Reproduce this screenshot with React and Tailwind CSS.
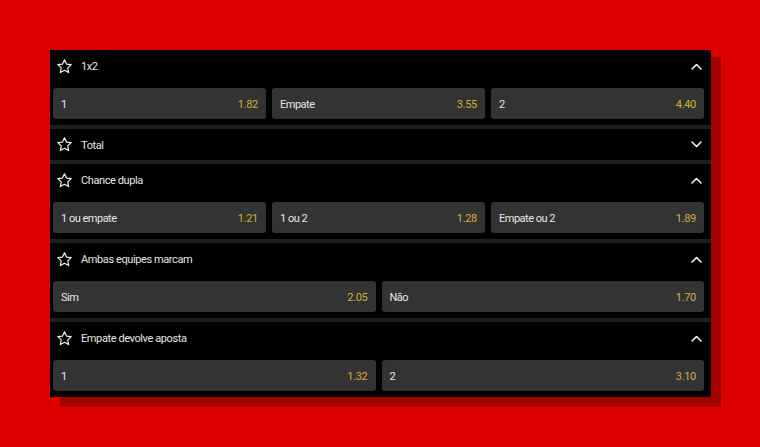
import React from "react";

const sections = [
  { title: "1x2", open: true, odds: [["1", "1.82"], ["Empate", "3.55"], ["2", "4.40"]] },
  { title: "Total", open: false, odds: [] },
  { title: "Chance dupla", open: true, odds: [["1 ou empate", "1.21"], ["1 ou 2", "1.28"], ["Empate ou 2", "1.89"]] },
  { title: "Ambas equipes marcam", open: true, odds: [["Sim", "2.05"], ["Não", "1.70"]] },
  { title: "Empate devolve aposta", open: true, odds: [["1", "1.32"], ["2", "3.10"]] },
];

function Star() {
  return (
    <svg width="17" height="17" viewBox="0 0 24 24" fill="none" stroke="#f2f2f2" strokeWidth="1.7" strokeLinejoin="round">
      <path d="M12 2.5l2.9 6.1 6.6.8-4.9 4.6 1.3 6.6L12 17.3l-5.9 3.3 1.3-6.6-4.9-4.6 6.6-.8z" />
    </svg>
  );
}

function Chevron({ up }) {
  return (
    <svg width="11" height="7" viewBox="0 0 11 7" fill="none" stroke="#f2f2f2" strokeWidth="1.6" strokeLinecap="round" strokeLinejoin="round">
      {up ? <polyline points="1,6 5.5,1.5 10,6" /> : <polyline points="1,1 5.5,5.5 10,1" />}
    </svg>
  );
}

export default function App() {
  return (
    <div className="h-[447px] w-[760px] bg-[#dd0000] pt-[50px] pl-[50px]" style={{ fontFamily: "Roboto, 'Liberation Sans', sans-serif" }}>
      <div className="w-[661px] bg-black shadow-[10px_10px_0_#a30000,10px_7px_0_#a30000] flex flex-col">
        {sections.map((s, i) => (
          <div key={s.title} className={i > 0 ? "border-t-4 border-[#1f1f1f]" : ""}>
            <div className={`${s.open ? "h-8" : "h-[31px]"} flex items-center pl-[6px] pr-[9px]`}>
              <Star />
              <span className="ml-[8px] pt-[3px] text-[11px] text-[#e6e6e6] tracking-[-0.4px]">{s.title}</span>
              <span className="ml-auto flex items-center">
                <Chevron up={s.open} />
              </span>
            </div>
            {s.open && (
              <div className={`pt-[6px] pb-[6px] pl-[3px] pr-[7px] grid gap-[6px] ${s.odds.length === 3 ? "grid-cols-3" : "grid-cols-2"}`}>
                {s.odds.map(([label, val], j) => (
                  <div key={j} className="h-[31px] rounded-[3px] bg-[#333333] flex items-center justify-between pl-[8px] pr-[8px] pt-[3px] text-[11px]">
                    <span className="text-[#e6e6e6] tracking-[-0.5px]">{label}</span>
                    <span className="text-[#d4ae3c] tracking-[-0.3px]">{val}</span>
                  </div>
                ))}
              </div>
            )}
          </div>
        ))}
      </div>
    </div>
  );
}
